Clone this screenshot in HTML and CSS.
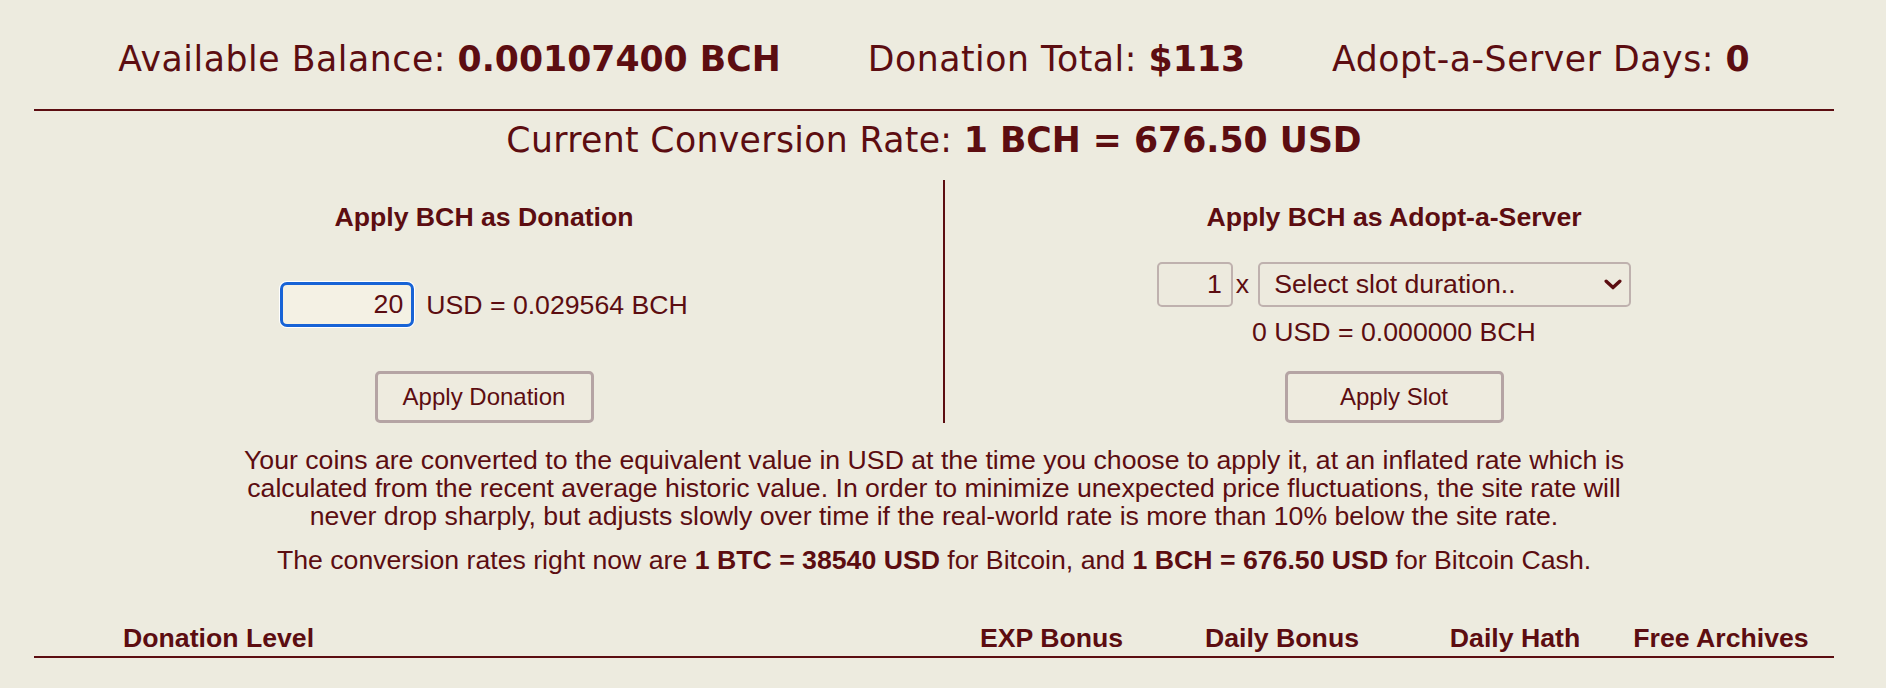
FILE: index.html
```html
<!DOCTYPE html>
<html lang="en">
<head>
<meta charset="utf-8">
<title>Apply BCH</title>
<link rel="stylesheet" href="styles.css">
</head>
<body>
<div class="page">
  <div class="balances">
    <div class="stat">Available Balance: <strong>0.00107400 BCH</strong></div>
    <div class="stat">Donation Total: <strong>$113</strong></div>
    <div class="stat">Adopt-a-Server Days: <strong>0</strong></div>
  </div>
  <div class="rate">Current Conversion Rate: <strong>1 BCH = 676.50 USD</strong></div>

  <div class="apply">
    <div class="col">
      <h3 class="col-title">Apply BCH as Donation</h3>
      <div class="mid">
        <div class="row">
          <input class="field amount" type="text" value="20">
          <span class="conv">USD = 0.029564 BCH</span>
        </div>
      </div>
      <button class="btn" type="button">Apply Donation</button>
    </div>
    <div class="divider"></div>
    <div class="col">
      <h3 class="col-title">Apply BCH as Adopt-a-Server</h3>
      <div class="mid">
        <div class="row">
          <input class="field count" type="text" value="1">
          <span class="times">x</span>
          <span class="select-wrap">
            <select class="field slot">
              <option>Select slot duration..</option>
            </select>
            <svg class="chev" width="18" height="11" viewBox="0 0 18 11"><polyline points="2.2,2.2 9,8.6 15.8,2.2" fill="none" stroke="#5C0D11" stroke-width="3.4" stroke-linecap="round" stroke-linejoin="round"/></svg>
          </span>
        </div>
        <div class="slot-conv">0 USD = 0.000000 BCH</div>
      </div>
      <button class="btn" type="button">Apply Slot</button>
    </div>
  </div>

  <p class="note">Your coins are converted to the equivalent value in USD at the time you choose to apply it, at an inflated rate which is<br>calculated from the recent average historic value. In order to minimize unexpected price fluctuations, the site rate will<br>never drop sharply, but adjusts slowly over time if the real-world rate is more than 10% below the site rate.</p>
  <p class="rates">The conversion rates right now are <strong>1 BTC = 38540 USD</strong> for Bitcoin, and <strong>1 BCH = 676.50 USD</strong> for Bitcoin Cash.</p>

  <div class="levels">
    <div class="lv-name">Donation Level</div>
    <div class="lv-col">EXP Bonus</div>
    <div class="lv-col">Daily Bonus</div>
    <div class="lv-col">Daily Hath</div>
    <div class="lv-col">Free Archives</div>
  </div>
</div>
</body>
</html>
```

FILE: styles.css
```css
html, body {
  margin: 0;
  padding: 0;
  background: #EDEBDF;
}

body {
  color: #5C0D11;
  font-family: Arial, "Liberation Sans", sans-serif;
  font-size: 26.67px;
}

.page {
  width: 1800px;
  margin-left: 34px;
}

.balances {
  display: flex;
  justify-content: center;
  gap: 87px;
  padding-top: 39px;
  padding-bottom: 30px;
  border-bottom: 2px solid #5C0D11;
  font-family: Verdana, "DejaVu Sans", sans-serif;
  font-size: 34.67px;
  line-height: 40px;
  white-space: nowrap;
  letter-spacing: 0.55px;
}

.balances strong,
.rate strong {
  letter-spacing: 0;
}

.rate {
  margin-top: 9px;
  text-align: center;
  font-family: Verdana, "DejaVu Sans", sans-serif;
  font-size: 34.67px;
  line-height: 40px;
  letter-spacing: 0.35px;
}

.apply {
  display: grid;
  grid-template-columns: 900px 20px 1fr;
  height: 243px;
  margin-top: 20px;
}

.divider {
  width: 2px;
  margin-left: 9px;
  background: #5C0D11;
}

.col {
  display: flex;
  flex-direction: column;
  align-items: center;
  padding-top: 21px;
}

.col-title {
  margin: 0;
  font-size: 26.67px;
  font-weight: bold;
  line-height: 32px;
}

.mid {
  flex: 1;
  display: flex;
  flex-direction: column;
  align-items: center;
  justify-content: center;
  padding-top: 5px;
}

.row {
  display: flex;
  align-items: center;
}

.field {
  box-sizing: border-box;
  height: 45px;
  margin: 0;
  font-family: Arial, "Liberation Sans", sans-serif;
  font-size: 26.67px;
  color: #5C0D11;
  background: #EDEADE;
  border: 2px solid #BFB1AE;
  border-radius: 5px;
  outline: none;
}

.amount {
  width: 134px;
  padding: 0 8px 0 4px;
  text-align: right;
  background: #F4F1E4;
  border: 3px solid #1763D6;
  border-radius: 7px;
  box-shadow: 0 0 0 1px #ffffff;
}

.conv {
  margin-left: 12px;
  line-height: 32px;
}

.count {
  width: 76px;
  padding: 0 9px 0 4px;
  text-align: right;
}

.times {
  margin: 0 9px 0 3px;
  line-height: 32px;
}

.select-wrap {
  position: relative;
  display: block;
}

.slot {
  display: block;
  width: 373px;
  padding: 0 40px 0 14px;
  -webkit-appearance: none;
  appearance: none;
}

.chev {
  position: absolute;
  right: 9px;
  top: 17px;
}

.slot-conv {
  margin-top: 9px;
  line-height: 32px;
}

.btn {
  box-sizing: border-box;
  width: 219px;
  height: 52px;
  margin: 0;
  padding: 0;
  font-family: Arial, "Liberation Sans", sans-serif;
  font-size: 24px;
  color: #5C0D11;
  background: #EEEBDF;
  border: 3px solid #B5A4A4;
  border-radius: 5px;
}

.note {
  margin: 23px 0 0;
  text-align: center;
  line-height: 28px;
}

.rates {
  margin: 16px 0 0;
  text-align: center;
  line-height: 28px;
}

.levels {
  display: grid;
  grid-template-columns: 927px 181px 280px 186px 1fr;
  margin-top: 48px;
  padding-bottom: 2px;
  border-bottom: 2px solid #5C0D11;
  font-weight: bold;
  line-height: 32px;
}

.lv-name {
  padding-left: 89px;
}

.lv-col {
  text-align: center;
  white-space: nowrap;
}
```
